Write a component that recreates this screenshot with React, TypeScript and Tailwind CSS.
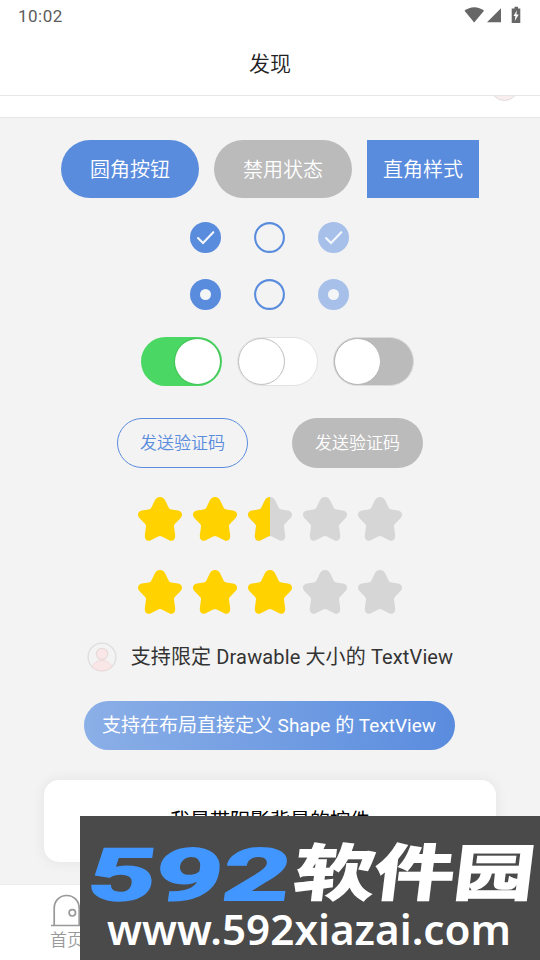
import React from 'react';

const STAR_PATH =
  'M22 0C24.5 0 26.3 1.4 27.5 4L30.6 10.4Q31.5 12.2 33.4 12.5L40 13.6C44.3 14.4 45.3 18.2 42.4 21.2L36.9 26.9Q35.8 28 36 29.6L37.2 38.3C37.6 42.6 34.8 45 31.2 43.3L23.8 39.5Q22 38.6 20.2 39.5L12.8 43.3C9.2 45 6.4 42.6 6.8 38.3L8 29.6Q8.2 28 7.1 26.9L1.6 21.2C-1.3 18.2-.3 14.4 4 13.6L10.6 12.5Q12.5 12.2 13.4 10.4L16.5 4C17.7 1.4 19.5 0 22 0Z';

interface StarProps {
  fill: 'full' | 'half' | 'empty';
}

const Star: React.FC<StarProps> = ({ fill }) => (
  <svg viewBox="0 0 44 44" className="h-11 w-11">
    <defs>
      <clipPath id="star-left">
        <rect x="0" y="0" width="22" height="44" />
      </clipPath>
    </defs>
    <path d={STAR_PATH} fill={fill === 'full' ? '#ffd200' : '#d6d6d6'} />
    {fill === 'half' && <path d={STAR_PATH} fill="#ffd200" clipPath="url(#star-left)" />}
  </svg>
);

const RatingBar: React.FC<{ value: number }> = ({ value }) => (
  <div className="flex justify-center gap-[11px]">
    {[0, 1, 2, 3, 4].map(i => (
      <Star key={i} fill={value >= i + 1 ? 'full' : value > i ? 'half' : 'empty'} />
    ))}
  </div>
);

interface MarkProps {
  kind: 'check' | 'radio' | 'off';
  disabled?: boolean;
}

const Mark: React.FC<MarkProps> = ({ kind, disabled }) => (
  <svg viewBox="0 0 31 31" className="h-[31px] w-[31px]">
    {kind === 'off' ? (
      <circle cx="15.5" cy="15.5" r="14.4" fill="none" stroke="#5a8cde" strokeWidth="2.1" />
    ) : (
      <circle cx="15.5" cy="15.5" r="15.5" fill={disabled ? '#a7c0ea' : '#5a8cde'} />
    )}
    {kind === 'check' && (
      <path d="M8 16L13 21L23.3 10.2" fill="none" stroke="#f4f7fc" strokeWidth="2.1" strokeLinecap="round" />
    )}
    {kind === 'radio' && <circle cx="15.5" cy="15.5" r="5.5" fill="#f4f5f7" />}
  </svg>
);

const Avatar: React.FC = () => (
  <svg viewBox="0 0 30 30" className="h-[30px] w-[30px]" fill="none">
    <circle cx="15" cy="15" r="13.9" stroke="#dedede" strokeWidth="1.3" />
    <path d="M5.5 25C6.5 20.8 10 18.6 15 18.6S23.5 20.8 24.5 25C18.5 30 11.5 30 5.5 25Z" fill="#f9e6e6" stroke="#f3dada" strokeWidth="1" />
    <circle cx="15" cy="12" r="5.7" fill="#f9e6e6" stroke="#e9dada" strokeWidth="1.2" />
  </svg>
);

const StatusBar: React.FC = () => (
  <div className="flex h-8 shrink-0 items-center justify-between pl-[18px] pr-[18px]">
    <span className="pt-px text-[17px] tracking-[0.5px] text-[#5c5c5c]">10:02</span>
    <svg viewBox="0 0 58 18" className="-mt-[3px] h-[18px] w-[58px]" fill="#666">
      <path d="M.5 4.8C6-.1 14.5-.1 20 4.8L10.2 16.5Z" />
      <path d="M37 2.3V16.2H23Z" />
      <path fillRule="evenodd" d="M50.5 .8H54V2.4H56.3V17H47.7V2.4H50.5ZM53 4.3L49.5 10H51.4L50.8 15L54.7 8.6H52.3Z" />
    </svg>
  </div>
);

const Watermark: React.FC = () => (
  <div className="absolute bottom-0 left-20 h-36 w-[460px] bg-[#4a4a4a]">
    <svg viewBox="0 0 460 144" className="h-36 w-[460px]">
      <text
        transform="translate(5 84) skewX(-8)"
        fontSize="72"
        textLength="202"
        lengthAdjust="spacingAndGlyphs"
        fill="#4196ff"
        stroke="#4196ff"
        strokeWidth="2"
        className="font-[Roboto] font-bold"
      >
        592
      </text>
      <text
        transform="translate(212 79) skewX(-7)"
        fontSize="61"
        textLength="240"
        lengthAdjust="spacingAndGlyphs"
        fill="#fff"
        stroke="#fff"
        strokeWidth="1.8"
        className="font-['Noto_Sans_CJK_SC'] font-bold"
      >
        软件园
      </text>
      <text
        x="27"
        y="129"
        fontSize="42"
        textLength="404"
        lengthAdjust="spacingAndGlyphs"
        fill="#fff"
        className="font-['Noto_Sans'] font-semibold"
      >
        www.592xiazai.com
      </text>
    </svg>
  </div>
);

const App: React.FC = () => {
  return (
    <div className="relative flex h-[960px] w-[540px] flex-col overflow-hidden bg-white font-[Roboto,'Noto_Sans_CJK_SC',sans-serif]">
      <StatusBar />
      <header className="flex h-16 shrink-0 items-center justify-center border-b border-[#e6e6e6] pt-0.5 text-[21px] font-[350] text-[#222]">
        发现
      </header>

      {/* Tail of the scrolled list item */}
      <div className="flex h-[22px] shrink-0 justify-end overflow-hidden border-b border-[#e6e6e6] pr-[21px]">
        <div className="-mt-6 h-[29px] w-[29px] rounded-full border border-[#e2dcdc] bg-[#f8eeee]"></div>
      </div>

      <main className="flex h-[766px] shrink-0 flex-col items-center bg-[#f3f3f3] pt-[22px]">
        <div className="flex gap-[15px] text-[20px] font-[350] text-white">
          <button className="h-[58px] w-[138px] rounded-full bg-[#5a8cde] pt-0.5">圆角按钮</button>
          <button className="h-[58px] w-[138px] rounded-full bg-[#bbb] pt-0.5">禁用状态</button>
          <button className="h-[58px] w-28 bg-[#5a8cde] pt-0.5">直角样式</button>
        </div>

        <div className="mt-6 flex gap-[33px] pr-px">
          <Mark kind="check" />
          <Mark kind="off" />
          <Mark kind="check" disabled />
        </div>
        <div className="mt-[26px] flex gap-[33px] pr-px">
          <Mark kind="radio" />
          <Mark kind="off" />
          <Mark kind="radio" disabled />
        </div>

        {/* Switches */}
        <div className="mt-[27px] flex gap-[15px] pl-[15px]">
          <div className="flex h-[49px] w-[81px] items-center justify-end rounded-full bg-[#4bd763] pr-[2px]">
            <div className="h-[45px] w-[45px] rounded-full bg-white shadow-[0_0_1px_1px_#43c259]"></div>
          </div>
          <div className="flex h-[49px] w-[81px] items-center rounded-full border-[1.5px] border-[#e2e2e2] bg-white">
            <div className="h-[47px] w-[47px] rounded-full border border-[#bebebe] bg-white"></div>
          </div>
          <div className="flex h-[49px] w-[81px] items-center rounded-full border-[1.5px] border-[#dcdcdc] bg-[#bbb]">
            <div className="h-[47px] w-[47px] rounded-full border border-[#b6b6b6] bg-white"></div>
          </div>
        </div>

        <div className="mt-8 flex gap-11 text-[17px] font-[350]">
          <button className="h-[50px] w-[131px] rounded-full border border-[#5a8cde] pt-0.5 text-[#5a8cde]">发送验证码</button>
          <button className="h-[50px] w-[131px] rounded-full bg-[#bbb] pt-0.5 text-white">发送验证码</button>
        </div>

        <div className="mt-[29px] flex flex-col gap-[29px]">
          <RatingBar value={2.5} />
          <RatingBar value={3} />
        </div>

        <div className="mt-7 flex h-[30px] items-center gap-[14px] whitespace-nowrap text-[20px] tracking-[0.13px] text-[#333]">
          <Avatar />
          <span>支持限定 Drawable 大小的 TextView</span>
        </div>

        <div className="mt-[29px] flex h-[49px] w-[371px] -translate-x-px items-center justify-center whitespace-nowrap rounded-full bg-linear-to-r from-[#8bafe7] to-[#5a8cde] pt-0.5 text-[19px] text-white">
          支持在布局直接定义 Shape 的 TextView
        </div>

        <div className="mt-[30px] flex h-[82px] w-[452px] items-center justify-center rounded-[15px] bg-white text-[20px] text-black shadow-[0_0_12px_2px_rgba(0,0,0,0.05)]">
          我是带阴影背景的控件
        </div>
      </main>

      <nav className="flex flex-1 border-t border-[#ececec] bg-white pl-[50px] text-[#999]">
        <div className="flex flex-col items-center pt-[9px]">
          <svg viewBox="0 0 34 33" className="h-[33px] w-[34px]" fill="none" stroke="#999" strokeWidth="1.7">
            <path d="M4.2 31V14.5C4.2 7 9.5 1.5 16.7 1.5S29.2 7 29.2 14.5V31M1 31.5H33" />
            <circle cx="22.3" cy="18.8" r="3.2" />
          </svg>
          <span className="pt-px text-[17px] font-[350] leading-6">首页</span>
        </div>
      </nav>

      <Watermark />
    </div>
  );
};

export default App;
